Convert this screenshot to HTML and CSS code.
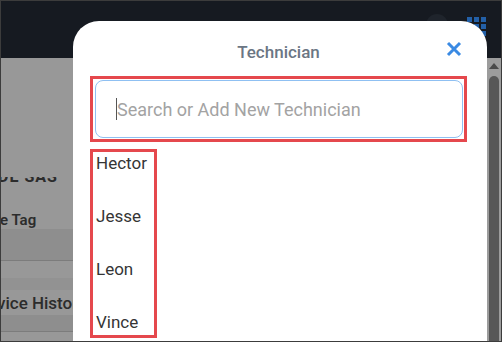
FILE: index.html
```html
<!DOCTYPE html>
<html>
<head>
<meta charset="utf-8">
<link rel="stylesheet" href="styles.css">
</head>
<body>
<div class="frame">
  <header class="topbar">
    <span class="avatar"></span>
    <span class="apps">
      <i></i><i></i><i></i><i></i><i></i><i></i><i></i><i></i><i></i>
    </span>
  </header>
  <div class="page">
    <div class="bg-col">
      <div class="bg-row bg-code"><span class="clip"><span class="clip-in">DE SAS</span></span></div>
      <div class="bg-row bg-tag">e Tag</div>
      <div class="bg-row bg-band"></div>
      <div class="bg-row bg-gap"></div>
      <div class="bg-row bg-band2"></div>
      <div class="bg-row bg-hist">vice History</div>
      <div class="bg-row bg-band3"></div>
      <div class="bg-row bg-end"></div>
    </div>
    <div class="bg-fill"></div>
    <div class="scrollbar">
      <span class="arrow"></span>
      <span class="thumb"></span>
    </div>
  </div>

  <div class="modal">
    <div class="modal-head">
      <h2 class="modal-title">Technician</h2>
      <svg class="close" width="16" height="16" viewBox="0 0 16 16" aria-hidden="true">
        <path d="M2 2 L14 14 M14 2 L2 14" stroke="#3a8ae3" stroke-width="3" stroke-linecap="butt" fill="none"/>
      </svg>
    </div>
    <div class="mark mark-input">
      <div class="search">
        <span class="caret"></span>
        <span class="placeholder">Search or Add New Technician</span>
      </div>
    </div>
    <ul class="mark mark-list">
      <li>Hector</li>
      <li>Jesse</li>
      <li>Leon</li>
      <li>Vince</li>
    </ul>
  </div>
</div>
</body>
</html>
```

FILE: styles.css
```css
* { box-sizing: border-box; }
html, body { margin: 0; padding: 0; }
body { font-family: Roboto, "Liberation Sans", sans-serif; background: #fff; }

.frame {
  position: relative;
  width: 502px;
  height: 342px;
  border: 1px solid #3c3c3c;
  overflow: hidden;
  display: flex;
  flex-direction: column;
  background: #989898;
}

.topbar {
  height: 57px;
  flex: none;
  background: #161a21;
  position: relative;
}
.avatar {
  position: absolute;
  left: 425px;
  top: 13px;
  width: 22px;
  height: 22px;
  border-radius: 50%;
  background: #1f242c;
}
.apps {
  position: absolute;
  left: 466px;
  top: 16px;
  display: grid;
  grid-template-columns: repeat(3, 5px);
  grid-auto-rows: 5px;
  gap: 2px;
}
.apps i { display: block; background: #2360a8; }

.page {
  flex: 1;
  display: flex;
  min-height: 0;
}
.bg-col {
  width: 72px;
  flex: none;
  display: flex;
  flex-direction: column;
  color: #2c2c2c;
  font-weight: 700;
  font-size: 14px;
  white-space: nowrap;
  overflow: hidden;
}
.bg-row { display: flex; align-items: flex-end; justify-content: flex-start; overflow: hidden; }
.bg-code { height: 126px; }
.clip { display: block; height: 7px; overflow: hidden; line-height: 16px; font-size: 16px; letter-spacing: 1px; margin-left: -3px; }
.clip-in { display: block; margin-top: -8px; }
.bg-tag { height: 45px; align-items: center; padding-top: 26px; margin-left: -1px; font-weight: 600; font-size: 15px; }
.bg-band { height: 32px; background: #8e8e8e; border-bottom: 1px solid #7c7c7c; }
.bg-gap { height: 17px; }
.bg-band2 { height: 12px; background: #929292; }
.bg-hist { height: 25px; align-items: center; margin-left: -4px; font-weight: 500; font-size: 17px; }
.bg-band3 { height: 17px; background: #8e8e8e; border-bottom: 1px solid #7c7c7c; }
.bg-end { flex: 1; }

.bg-fill { flex: 1; }

.scrollbar {
  width: 15px;
  flex: none;
  background: #9c9c9c;
  display: flex;
  flex-direction: column;
  align-items: center;
  padding-top: 5px;
}
.arrow {
  width: 0; height: 0;
  border-left: 5px solid transparent;
  border-right: 5px solid transparent;
  border-bottom: 6px solid #4a4a4a;
}
.thumb {
  margin-top: 7px;
  width: 10px;
  flex: 1;
  background: #575757;
  border-radius: 5px 5px 0 0;
}

.modal {
  position: absolute;
  left: 72px;
  top: 20px;
  width: 414px;
  height: 340px;
  background: #fff;
  border-radius: 26px 26px 0 0;
  display: flex;
  flex-direction: column;
  padding: 0 20px 0 17px;
}
.modal-head {
  height: 54px;
  display: flex;
  align-items: center;
  justify-content: center;
  position: relative;
  padding-top: 8px;
}
.modal-title {
  margin: 0;
  font-size: 17px;
  font-weight: 500;
  color: #6b7684;
}
.close {
  position: absolute;
  right: 5px;
  top: 20px;
}

.mark { border: 3px solid #e5484d; }
.mark-input {
  padding: 1px 1px 1px 2px;
  margin-top: 1px;
}
.search {
  height: 58px;
  border: 1px solid #8fc0f2;
  border-radius: 8px;
  display: flex;
  align-items: center;
  padding-left: 20px;
}
.caret { width: 1px; height: 22px; background: #555; }
.placeholder { font-size: 18px; color: #a3a3a3; }

.mark-list {
  list-style: none;
  margin: 7px 0 0 0;
  width: 67px;
  padding: 1px 0 3px 3px;
  display: flex;
  flex-direction: column;
  gap: 33px;
  font-size: 17px;
  line-height: 20px;
  color: #353535;
}
.mark-list li { height: 20px; }
```
